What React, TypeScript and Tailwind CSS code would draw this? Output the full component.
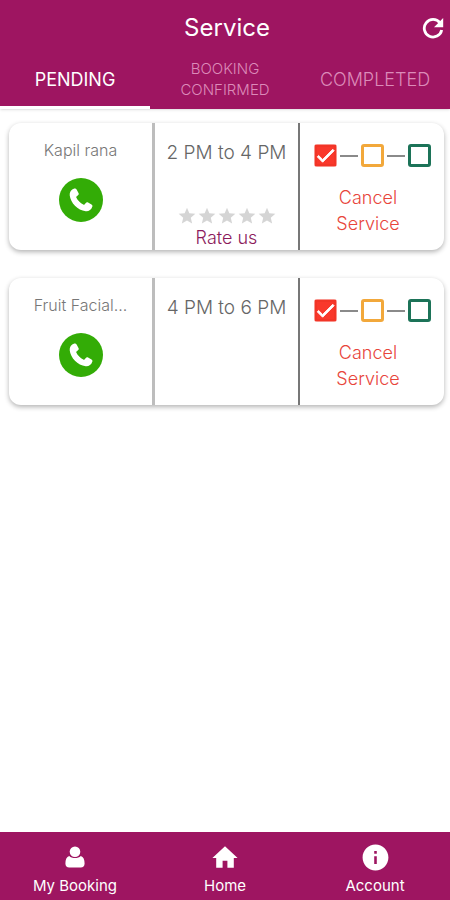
import { useState } from "react";
import clsx from "clsx";
import { MdCheck, MdInfo, MdStar } from "react-icons/md";

type Booking = {
    id: string;
    name: string;
    time: string;
    canRate: boolean;
};

const bookings: Booking[] = [
    { id: "b1", name: "Kapil rana", time: "2 PM to 4 PM", canRate: true },
    { id: "b2", name: "Fruit Facial...", time: "4 PM to 6 PM", canRate: false },
];

const tabs = [
    { id: "pending", label: "PENDING", size: "text-[18px]" },
    { id: "confirmed", label: "BOOKING CONFIRMED", size: "text-[15px]" },
    { id: "completed", label: "COMPLETED", size: "text-[18px]" },
];

const steps = [
    { id: "requested", label: "Requested", box: "border-[#f23527] checked:bg-[#f9382b]" },
    { id: "confirmed", label: "Confirmed", box: "border-[#f2a83b] checked:bg-[#f2a83b]" },
    { id: "completed", label: "Completed", box: "border-[#1c7358] checked:bg-[#1c7358]" },
];

const UserIcon = () => (
    <svg viewBox="0 0 20 22" className="h-[22px] w-5" fill="currentColor" aria-hidden="true">
        <circle cx="10" cy="5.8" r="5.3" />
        <path d="M4.2 10C1.6 10.8.4 13.4.4 17.4c0 2.6 1.5 4.1 3.8 4.1h11.6c2.3 0 3.8-1.5 3.8-4.1 0-4-1.2-6.6-3.8-7.4-1.4 1.4-3.4 2.1-5.8 2.1S5.6 11.4 4.2 10z" />
    </svg>
);

const HomeIcon = () => (
    <svg viewBox="0 0 26 22" className="h-[22px] w-[26px]" fill="currentColor" aria-hidden="true">
        <path d="M13 .2.4 12h3.800v9.700h6.400v-7h4.800v7h6.400V12h3.800z" />
    </svg>
);

const RefreshIcon = () => (
    <svg viewBox="0 0 22 22" className="size-[22px]" fill="none" aria-hidden="true">
        <path d="M18 5.800A8.800 8.800 0 1 0 19.700 13" stroke="currentColor" strokeWidth="2.800" />
        <path d="M21.200 1v9.200H12z" fill="currentColor" />
    </svg>
);

const PhoneIcon = () => (
    <svg viewBox="0 0 24 24" className="size-6" fill="currentColor" aria-hidden="true">
        <path d="M5.3.6c1-.4 1.800 0 2.300.9l1.900 3.400c.5.9.3 1.700-.5 2.300L7.500 8.400c-.4.3-.4.7-.2 1.200 1.500 3 3.900 5.400 7 7 .5.3.9.2 1.200-.2l1.300-1.500c.6-.8 1.400-.9 2.300-.4l3.400 1.900c.9.5 1.200 1.300.8 2.300-1.100 3.100-3.500 4.800-6.600 4.500C8.700 22.400 1.500 15 .7 7.300.4 4.100 2.200 1.700 5.300.6z" />
    </svg>
);

const StepTracker = ({ bookingId }: { bookingId: string }) => (
    <div className="flex items-center justify-center gap-[3px]">
        {steps.map((step, i) => (
            <div key={step.id} className="contents">
                {i > 0 && <span className="h-0.5 w-[18px] bg-[#8a8a8a]" />}
                <span className="relative flex">
                    <input
                        id={`${bookingId}-${step.id}`}
                        type="checkbox"
                        aria-label={step.label}
                        defaultChecked={i === 0}
                        className={clsx("peer size-[23px] appearance-none rounded-[3px] border-[3px] bg-white", step.box)}
                    />
                    <MdCheck className="pointer-events-none absolute inset-0 hidden size-[23px] stroke-current stroke-1 text-white peer-checked:block" />
                </span>
            </div>
        ))}
    </div>
);

const BookingCard = ({ booking }: { booking: Booking }) => (
    <article className="grid h-[127px] grid-cols-[146fr_143fr_146fr] overflow-hidden rounded-xl bg-white shadow-[0_2px_5px_rgba(0,0,0,0.3)]">
        <div className="flex flex-col items-center gap-4 border-r-[3px] border-[#bdbdbd] pt-[15px]">
            <h2 className="text-[16px] leading-6 font-light text-[#777]">{booking.name}</h2>
            <button type="button" aria-label={`Call ${booking.name}`} className="flex size-11 items-center justify-center rounded-full bg-[#33ac06] text-white">
                <PhoneIcon />
            </button>
        </div>

        <div className="flex flex-col items-center justify-between pt-4">
            <p className="text-[19px] leading-7 font-light whitespace-nowrap text-[#666]">{booking.time}</p>
            {booking.canRate && (
                <div className="flex flex-col items-center">
                    <div className="flex text-[#d5d5d5]">
                        {[1, 2, 3, 4, 5].map((n) => (
                            <MdStar key={n} className="size-5" />
                        ))}
                    </div>
                    <button type="button" className="text-[18px] leading-6 font-light text-[#8c1a5c]">
                        Rate us
                    </button>
                </div>
            )}
        </div>

        <div className="flex flex-col items-center gap-[18px] border-l-2 border-[#777] pt-[21px]">
            <StepTracker bookingId={booking.id} />
            <button type="button" className="mr-2 w-20 text-[18px] leading-[26px] font-light text-[#e8453b]">
                Cancel Service
            </button>
        </div>
    </article>
);

export default function App() {
    const [activeTab, setActiveTab] = useState("pending");

    return (
        <div className="flex min-h-screen flex-col bg-white font-['Inter',sans-serif]">
            <header className="bg-[#9e1561] text-white shadow-sm">
                <div className="grid grid-cols-[1fr_auto_1fr] items-center pt-3 pl-1">
                    <h1 className="col-start-2 text-2xl leading-8">Service</h1>
                    <button type="button" aria-label="Refresh" className="mr-1.5 justify-self-end">
                        <RefreshIcon />
                    </button>
                </div>

                <div role="tablist" className="grid h-[65px] grid-cols-3">
                    {tabs.map((tab) => (
                        <button
                            key={tab.id}
                            type="button"
                            role="tab"
                            aria-selected={activeTab === tab.id}
                            onClick={() => setActiveTab(tab.id)}
                            className={clsx(
                                "flex items-center justify-center border-b-[3px] px-4 pt-2 leading-[21px]",
                                tab.size,
                                activeTab === tab.id ? "border-white" : "border-transparent font-light text-[#dc8bb9]",
                            )}
                        >
                            {tab.label}
                        </button>
                    ))}
                </div>
            </header>

            <main className="flex flex-1 flex-col gap-7 py-[14px] pr-[6px] pl-[9px]">
                {bookings.map((booking) => (
                    <BookingCard key={booking.id} booking={booking} />
                ))}
            </main>

            <nav className="grid grid-cols-3 bg-[#9e1561] pt-2 pb-[3px] text-[15px] leading-[23px] text-white">
                <a href="#bookings" className="flex flex-col items-center">
                    <span className="flex h-[34px] items-center">
                        <UserIcon />
                    </span>
                    My Booking
                </a>
                <a href="#home" className="flex flex-col items-center">
                    <span className="flex h-[34px] items-center">
                        <HomeIcon />
                    </span>
                    Home
                </a>
                <a href="#account" className="flex flex-col items-center">
                    <span className="flex h-[34px] items-center">
                        <MdInfo className="size-[31px]" />
                    </span>
                    Account
                </a>
            </nav>
        </div>
    );
}
